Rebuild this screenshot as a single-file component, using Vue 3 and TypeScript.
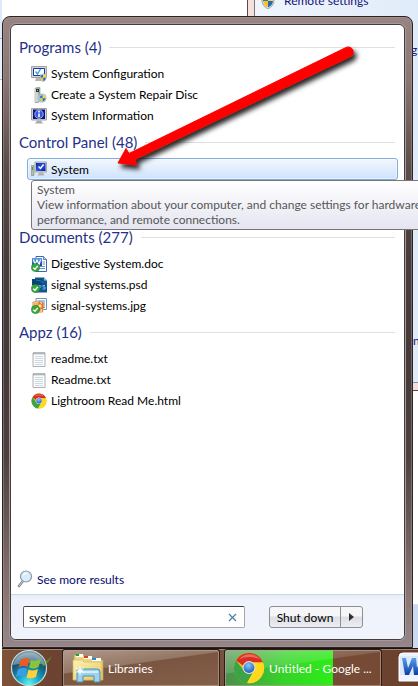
<script setup lang="ts">
import { ref } from 'vue'

type IconName = 'config' | 'repair' | 'info' | 'system' | 'doc' | 'psd' | 'jpg' | 'txt' | 'chrome'

interface Result {
  label: string
  icon: IconName
  selected?: boolean
}

interface Group {
  title: string
  count: number
  items: Result[]
}

const query = ref('system')

const groups: Group[] = [
  {
    title: 'Programs',
    count: 4,
    items: [
      { label: 'System Configuration', icon: 'config' },
      { label: 'Create a System Repair Disc', icon: 'repair' },
      { label: 'System Information', icon: 'info' },
    ],
  },
  {
    title: 'Control Panel',
    count: 48,
    items: [{ label: 'System', icon: 'system', selected: true }],
  },
  {
    title: 'Documents',
    count: 277,
    items: [
      { label: 'Digestive System.doc', icon: 'doc' },
      { label: 'signal systems.psd', icon: 'psd' },
      { label: 'signal-systems.jpg', icon: 'jpg' },
    ],
  },
  {
    title: 'Appz',
    count: 16,
    items: [
      { label: 'readme.txt', icon: 'txt' },
      { label: 'Readme.txt', icon: 'txt' },
      { label: 'Lightroom Read Me.html', icon: 'chrome' },
    ],
  },
]
</script>

<template>
  <div class="screen">
    <svg class="defs" width="0" height="0" aria-hidden="true">
      <defs>
        <linearGradient id="screenBlue" x1="0" y1="0" x2="1" y2="1">
          <stop offset="0" stop-color="#0a1fae" />
          <stop offset=".5" stop-color="#2c55ea" />
          <stop offset="1" stop-color="#0717a0" />
        </linearGradient>
        <linearGradient id="folderFill" x1="0" y1="0" x2="1" y2="1">
          <stop offset="0" stop-color="#fdf3b4" />
          <stop offset="1" stop-color="#e6c765" />
        </linearGradient>
        <linearGradient id="wordBlue" x1="0" y1="0" x2="0" y2="1">
          <stop offset="0" stop-color="#5b9be8" />
          <stop offset="1" stop-color="#0b3fa4" />
        </linearGradient>
        <radialGradient id="orbFill" cx=".5" cy=".95" r=".95">
          <stop offset="0" stop-color="#5ff2f4" />
          <stop offset=".35" stop-color="#159fc0" />
          <stop offset=".7" stop-color="#17506e" />
          <stop offset="1" stop-color="#8ba9b5" />
        </radialGradient>
        <radialGradient id="ball" cx=".45" cy=".3" r=".7">
          <stop offset="0" stop-color="#8fc5f8" />
          <stop offset="1" stop-color="#1a5fbd" />
        </radialGradient>
        <symbol id="shield" viewBox="0 0 14 16">
          <path d="M7 0 13 2.500V7Q13 13 7 16 1 13 1 7V2.500Z" fill="#dfe5e9" stroke="#79868e" stroke-width=".7" />
          <path d="M7 1.500V8H2V3.500Q5 3 7 1.500Z" fill="#2c77ce" />
          <path d="M7 1.500V8H12V3.500Q9 3 7 1.500Z" fill="#ffd22c" />
          <path d="M2 8H7V14.500Q2.500 12.500 2 8Z" fill="#fbc21c" />
          <path d="M12 8H7V14.500Q11.500 12.500 12 8Z" fill="#2469bd" />
        </symbol>
        <symbol id="check" viewBox="0 0 10 10">
          <circle cx="5" cy="5" r="4.500" fill="#35a83b" stroke="#1c7c2a" stroke-width=".6" />
          <path d="M2.500 5.200 4.400 7 7.600 3.200" fill="none" stroke="#fff" stroke-width="1.500" />
        </symbol>
        <symbol id="config" viewBox="0 0 16 16">
          <path d="M.5.500H15.500V11.500H.5Z" fill="#d5d6ce" stroke="#a3a49f" />
          <path d="M2.500 2.500H13.500V9.500H2.500Z" fill="#fff" stroke="#1733ad" />
          <path d="m4.500 5.500 2 2.500 3-5" fill="none" stroke="#37a0c8" stroke-width="1.300" />
          <path d="M5 12h6l1 3H4Z" fill="#b6b7b1" />
          <use href="#shield" x="8.500" y="7.500" width="7.500" height="8.500" />
        </symbol>
        <symbol id="repair" viewBox="0 0 16 16">
          <path d="M4 1.500 6 .5h3v14l-2 1H4Z" fill="#a7aaa4" stroke="#8b8f8a" stroke-width=".6" />
          <path d="M4 2h3v13H4Z" fill="#d0d3ce" />
          <path d="M5 2h3v3H5Z" fill="#223c28" />
          <path d="M6 3h1v1H6Z" fill="#3cff38" />
          <circle cx="11" cy="11" r="4.500" fill="#9ccbdc" />
          <use href="#shield" x="8" y="7" width="7.500" height="8.500" />
        </symbol>
        <symbol id="info" viewBox="0 0 16 16">
          <path d="M.5.500H15.500V12H.5Z" fill="#d0d1c9" stroke="#a3a49f" />
          <path d="M2 1.500H14V11H2Z" fill="#08147f" />
          <path d="M6 12.500h4l2 3H4Z" fill="#aaaba5" />
          <circle cx="8" cy="6.200" r="4.200" fill="#3457e0" stroke="#c5d0fb" stroke-width=".8" />
          <path d="M7.200 5.400h1.600v3.600H7.200ZM7.200 3h1.600v1.500H7.200Z" fill="#fff" />
        </symbol>
        <symbol id="system" viewBox="0 0 16 16">
          <path d="M.5 4.500h2.500v10H.5Z" fill="#b5bab3" stroke="#838880" stroke-width=".6" />
          <path d="M1 6h1v3H1Z" fill="#24b52a" />
          <path d="M4 1H15.500V11H4Z" fill="#d8d9d2" stroke="#a5a6a1" />
          <path d="M5 2H14.500V10H5Z" fill="url(#screenBlue)" />
          <path d="m7.500 5.500 2 2 3-4" fill="none" stroke="#fff" stroke-width="1.300" />
          <path d="M8 11.500h4l1.500 3H6.500Z" fill="#b2b3ad" />
        </symbol>
        <symbol id="doc" viewBox="0 0 16 16">
          <path d="M5 .5h7.500l3 3v12H5Z" fill="#fff" stroke="#3b66b3" />
          <path d="M12.500.5v3h3" fill="#bfd4f5" stroke="#3b66b3" stroke-width=".8" />
          <path d="M11.500 6h2.500M11.500 8h2.500M8 12.500h6M8 10.500h6" stroke="#6a8fd0" />
          <path d="M1 2h10v8H1Z" fill="url(#wordBlue)" />
          <path d="m2.500 3.500 1.500 5L6 4l2 4.500 1.500-5" fill="none" stroke="#fff" stroke-width="1.200" />
          <use href="#check" x="0" y="7" width="9" height="9" />
        </symbol>
        <symbol id="psd" viewBox="0 0 16 16">
          <path d="M4 .5h9l3 3v12H4Z" fill="#15558f" />
          <path d="M13 .5v3h3Z" fill="#83bfea" />
          <path d="M1 2h10v6H1Z" fill="#0c447a" />
          <path d="M5 3q5 0 7 3" fill="none" stroke="#2677b5" />
          <path d="M8 12.500v-4h1.500q1.200 1-.2 2H8M14 8.500h-2v1.500h2v2h-2.500" fill="none" stroke="#6cc3f6" stroke-width=".9" />
          <use href="#check" x="0" y="7" width="9" height="9" />
        </symbol>
        <symbol id="jpg" viewBox="0 0 16 16">
          <path d="M5 .5h10.500v11H5Z" fill="#fff" stroke="#7793bd" />
          <path d="M6.500 2H14v8H6.500Z" fill="#9cc9f1" />
          <path d="M2 4h9.500v10H2Z" fill="#fff" stroke="#e08438" />
          <path d="M3 5h7.500v8H3Z" fill="#f6b24c" />
          <path d="m8 3 2 3 3-1-1 3 2 2-4 1-2 2-2-3-2-2 3-1Z" fill="#ee7120" />
          <circle cx="9" cy="8" r="1.700" fill="#ffe68a" />
          <use href="#check" x="0" y="7" width="9" height="9" />
        </symbol>
        <symbol id="txt" viewBox="0 0 16 16">
          <path d="M2 2h12v13.500H2Z" fill="#fbfcfc" stroke="#a4a7a9" stroke-width=".9" />
          <path d="M3 1v2.500M5 1v2.500M7 1v2.500M9 1v2.500M11 1v2.500M13 1v2.500" stroke="#8d9295" stroke-width=".9" />
          <path d="M4 5.500h8M4 7.500h8M4 9.500h8M4 11.500h8M4 13.500h8" stroke="#c6d5dc" stroke-width=".9" />
        </symbol>
        <symbol id="chrome" viewBox="0 0 32 32">
          <circle cx="16" cy="16" r="15" fill="#e8c51d" />
          <path d="M3 8.500A15 15 0 0 1 30 10.500H16A6 6 0 0 0 10.500 14Z" fill="#dc2d1f" />
          <path d="M3 8.500A15 15 0 0 0 14 31L20 20A6 6 0 0 1 10.500 18Z" fill="#3ca447" />
          <path d="M30 10.500A15 15 0 0 1 14 31L21 19A6 6 0 0 0 19.500 10.500Z" fill="#ffd91e" />
          <path d="M6 7A14 14 0 0 1 27 7Q16 3 6 7Z" fill="#fff" opacity=".3" />
          <circle cx="16" cy="15.500" r="6.400" fill="#dfe5ea" />
          <circle cx="16" cy="15.500" r="5.400" fill="url(#ball)" />
        </symbol>
      </defs>
    </svg>

    <div class="backdrop">
      <div class="left-window"></div>
      <div class="right-window">
        <a class="remote" href="#remote">
          <svg width="14" height="16" aria-hidden="true"><use href="#shield" /></svg>
          Remote settings
        </a>
        <span class="cut cut-top">gs</span>
        <span class="cut cut-low">n</span>
      </div>
      <div class="lower-window"></div>
    </div>

    <main class="start-menu">
      <div class="panel">
        <div class="results">
          <section v-for="group in groups" :key="group.title" class="group">
            <h2>{{ group.title }} ({{ group.count }})</h2>
            <ul>
              <li v-for="item in group.items" :key="item.label">
                <a href="#open" class="item" :class="{ selected: item.selected }">
                  <svg width="16" height="16" aria-hidden="true"><use :href="'#' + item.icon" /></svg>
                  <span>{{ item.label }}</span>
                </a>
                <div v-if="item.selected" class="tooltip" role="tooltip">
                  <div>System</div>
                  <div>View information about your computer, and change settings for hardware,</div>
                  <div>performance, and remote connections.</div>
                </div>
              </li>
            </ul>
          </section>
        </div>

        <a class="more" href="#more">
          <svg width="16" height="18" viewBox="0 0 16 18" aria-hidden="true">
            <path d="m6 11-4 5" stroke="#777c80" stroke-width="2.500" stroke-linecap="round" />
            <path d="m6 11-4 5" stroke="#d9dcde" stroke-linecap="round" />
            <circle cx="9" cy="6.500" r="5.500" fill="#d7edfa" stroke="#8c99a5" stroke-width="1.200" />
            <path d="M5.500 6Q7 2 11 3.500 8 4 5.500 6Z" fill="#fff" />
          </svg>
          See more results
        </a>

        <footer class="actions">
          <div class="search">
            <input v-model="query" type="text" aria-label="Search programs and files" />
            <button type="button" aria-label="Clear search" @click="query = ''">
              <svg width="9" height="9" viewBox="0 0 9 9" aria-hidden="true">
                <path d="m1 1 7 7M8 1 1 8" stroke="#4c7fa5" stroke-width="1.200" />
              </svg>
            </button>
          </div>
          <div class="power">
            <button type="button" class="shutdown">Shut down</button>
            <button type="button" class="options" aria-label="Power options">
              <svg width="5" height="8" viewBox="0 0 5 8" aria-hidden="true"><path d="M0 0 5 4 0 8Z" fill="#303030" /></svg>
            </button>
          </div>
        </footer>
      </div>
    </main>

    <nav class="taskbar">
      <button type="button" class="orb" aria-label="Start">
        <svg width="48" height="38" viewBox="0 0 48 38" aria-hidden="true">
          <circle cx="21" cy="19" r="17.500" fill="url(#orbFill)" stroke="#c9dde0" stroke-width="1.200" />
          <path d="M5 16A16.500 16.500 0 0 1 37 16Q22 12 5 16Z" fill="#fff" opacity=".32" />
          <path d="M34 14Q40 12 44 6 41 14 35 18Z" fill="#59bd35" opacity=".5" />
          <path d="M13 11Q17 7.500 21.500 10L19.500 18Q15 15.500 10.500 18.500Z" fill="#ef5a24" />
          <path d="M23 11Q27 13 33 10L30.500 18Q26 21 21 18.500Z" fill="#86c53c" />
          <path d="M10 20.500Q14.500 17.500 19 20L17 28Q12.500 25.500 8 28Z" fill="#3b9de6" />
          <path d="M20.500 20.500Q25.500 22.500 30 20L28 28Q23 30.500 18.500 28.500Z" fill="#ffd138" />
        </svg>
      </button>
      <button type="button" class="task">
        <svg width="34" height="32" viewBox="0 0 34 32" aria-hidden="true">
          <path d="M3 5V3h10l2 3h8l1 2h8v20H3Z" fill="#eed680" stroke="#b99a42" stroke-width=".8" />
          <path d="M5 2h7v3H5Z" fill="#fff" /><path d="M5 2h3v2H5Z" fill="#15a62b" />
          <path d="M13 4h8v3h-8Z" fill="#fff" /><path d="M13 4h4v2h-4Z" fill="#d94028" />
          <path d="M21 6h9v3h-9Z" fill="#fff" /><path d="M21 6h4v2h-4Z" fill="#238bd8" />
          <path d="M2 8h9l2 2h18v18H2Z" fill="url(#folderFill)" stroke="#d5b75b" stroke-width=".7" />
          <path d="M6 30V19q0-2 2-2h18q3 0 3 3v10h-6v-6H12v6Z" fill="#9bd3ec" stroke="#4b91b6" />
          <path d="M7 20h20" stroke="#e4f8ff" stroke-width="1.500" />
          <path d="m9 13 1 4 4-2-3 3 3 3-4-1-1 4-1-4-4 1 3-3-3-3 4 2Z" fill="#fff" opacity=".85" />
        </svg>
        <span>Libraries</span>
      </button>
      <button type="button" class="task active">
        <svg width="32" height="32" aria-hidden="true"><use href="#chrome" /></svg>
        <span>Untitled - Google ...</span>
      </button>
      <button type="button" class="word" aria-label="Word">
        <svg width="32" height="32" viewBox="0 0 32 32" aria-hidden="true">
          <path d="M5 1H31V29H1V5Q1 1 5 1Z" fill="#edf4fd" stroke="#fff" />
          <path d="M2 4H25V23H2Z" fill="#dce9fa" />
          <path d="M4 6h4l2 10 4-10h4l1 10 4-10h4L21 23h-5l-1-9-4 9H7Z" fill="url(#wordBlue)" />
        </svg>
      </button>
    </nav>

    <svg class="arrow" width="290" height="155" viewBox="0 0 290 155" aria-hidden="true">
      <defs>
        <filter id="arrowShadow" x="-10%" y="-10%" width="120%" height="130%">
          <feDropShadow dx="3" dy="4" stdDeviation="2.500" flood-color="#000" flood-opacity=".85" />
        </filter>
      </defs>
      <path
        d="M17 123 25 108.500 28 113.500 245 7.500A5 5 0 0 1 249.500 16.500L33.500 119.500 36 125Z"
        fill="#f00"
        stroke="#f00"
        stroke-linejoin="round"
        filter="url(#arrowShadow)"
      />
    </svg>
  </div>
</template>

<style>
html,
body {
  margin: 0;
  overflow: hidden;
}
</style>

<style scoped>
.screen {
  position: relative;
  display: flex;
  flex-direction: column;
  min-height: 100vh;
  overflow: hidden;
  background: #fff;
  color: #000;
  font: 12px/15px Lato, 'Open Sans', sans-serif;
}
.screen * {
  box-sizing: border-box;
}
.defs {
  position: absolute;
}
button,
input {
  font: inherit;
  color: inherit;
  margin: 0;
}
button {
  padding: 0;
  border: 0;
  background: none;
}
svg {
  flex: none;
  display: block;
}

/* Windows behind the menu */
.backdrop {
  position: absolute;
  inset: 0;
}
.left-window {
  position: absolute;
  top: 0;
  left: 0;
  width: 2px;
  height: 80px;
  background: linear-gradient(#dfeaf8 0 38px, #a6bad4 38px 39px, #e9f1fb 39px);
  border-bottom: 1px solid #c0c0c0;
}
.right-window {
  position: absolute;
  top: 0;
  left: 247px;
  right: 0;
  height: 391px;
  border-left: 1px solid #55494a;
  border-bottom: 1px solid #55494a;
  background: #f6dfdc;
}
.right-window::before {
  content: '';
  position: absolute;
  inset: 0 0 7px 6px;
  border-left: 1px solid #77787c;
  border-bottom: 1px solid #8d8e94;
  background: linear-gradient(90deg, #f0f5fc, #e0ebf9);
}
.remote {
  position: absolute;
  top: -7px;
  left: 13px;
  display: flex;
  gap: 9px;
  color: #14147a;
  text-decoration: none;
  white-space: nowrap;
}
.cut {
  position: absolute;
  color: #14147a;
}
.cut-top {
  top: 42px;
  left: 163px;
}
.cut-low {
  top: 333px;
  left: 165px;
}
.lower-window {
  position: absolute;
  right: 0;
  bottom: 38px;
  width: 6px;
  height: 44px;
  background: #cbdaf0;
  border-top: 1px solid #e1e1e1;
}

/* Start menu frame */
.start-menu {
  position: relative;
  flex: 1;
  display: flex;
  margin: 16px 5px 0 2px;
  padding: 7px;
  border: 1px solid #2a2425;
  border-radius: 8px 8px 0 0;
  background: linear-gradient(#988480 0, #8b7773 60px, #5b4d4b 150px, #473d3c 240px, #443a39 340px, #4d4140 440px, #8e7b77 590px, #96868a);
  box-shadow: inset 0 0 0 1px #a5989580;
}
.panel {
  flex: 1;
  min-width: 0;
  display: flex;
  flex-direction: column;
  border: 1px solid #453d3d;
  border-radius: 6px;
  background: #fff;
  box-shadow: 0 0 0 1px #a59a98;
}
.results {
  flex: 1;
  padding: 7px 6px 0 8px;
}
.group {
  min-height: 95px;
}
h2 {
  display: flex;
  align-items: center;
  gap: 8px;
  height: 31px;
  margin: 0 3px 0 0;
  font-size: 15px;
  font-weight: 400;
  color: #1f3189;
  white-space: nowrap;
}
h2::after {
  content: '';
  flex: 1;
  height: 1px;
  background: #dfe1e1;
}
ul {
  margin: 0;
  padding: 0 0 0 8px;
  list-style: none;
}
li {
  position: relative;
}
.item {
  display: flex;
  align-items: center;
  gap: 4px;
  height: 21px;
  padding: 0 4px;
  border-radius: 3px;
  color: #000;
  text-decoration: none;
  white-space: nowrap;
}
.item.selected {
  height: 22px;
  padding: 0 3px;
  border: 1px solid #84acdd;
  background: linear-gradient(#f2f7fe, #cfe3fd);
  box-shadow: inset 0 0 0 1px #ffffff66;
}
.tooltip {
  position: absolute;
  z-index: 2;
  top: 22px;
  left: 4px;
  padding: 1px 5px 2px;
  border: 1px solid #767676;
  border-radius: 3px;
  background: linear-gradient(#fff, #e4e5f0);
  color: #575757;
  white-space: nowrap;
}
.more {
  display: flex;
  align-items: center;
  gap: 4px;
  height: 30px;
  padding-left: 6px;
  color: #0a0a70;
  text-decoration: none;
}
.actions {
  display: flex;
  align-items: center;
  justify-content: space-between;
  gap: 24px;
  height: 45px;
  padding: 0 41px 0 12px;
  border-top: 1px solid #ccd9ea;
  border-radius: 0 0 5px 5px;
  background: linear-gradient(#e6edf7, #f0f3fb 5px);
}
.search {
  flex: 1;
  display: flex;
  height: 22px;
  border: 1px solid #a4a8ac;
  border-top-color: #3f4143;
  border-left-color: #5d5f61;
  border-radius: 2px;
  background: #fff;
}
.search input {
  flex: 1;
  min-width: 0;
  padding: 0 5px;
  border: 0;
  outline: 0;
  background: none;
}
.search button {
  display: grid;
  place-items: center;
  width: 24px;
}
.power {
  display: flex;
  height: 22px;
  border: 1px solid #8c8f94;
  border-radius: 3px;
  background: linear-gradient(#f6f6f8 0 45%, #dcdee3 50%, #eceef2);
}
.shutdown {
  width: 70px;
}
.options {
  display: grid;
  place-items: center;
  width: 22px;
  border-left: 1px solid #8c8f94;
}

/* Taskbar */
.taskbar {
  position: relative;
  display: flex;
  height: 38px;
  margin-left: 2px;
  border-top: 1px solid #1f130f;
  background: linear-gradient(90deg, #80523a, #6b4330 50px, #765040 220px, #6a402c);
  box-shadow: inset 0 1px #a08475;
  color: #fff;
}
.taskbar button {
  flex: none;
}
.orb {
  width: 60px;
  padding-left: 6px;
}
.task {
  display: flex;
  align-items: center;
  gap: 3px;
  width: 158px;
  margin-right: 4px;
  padding: 0 8px;
  border: 1px solid #2e1d16;
  border-bottom: 0;
  border-radius: 3px 3px 0 0;
  background: linear-gradient(172deg, #b09a8d, #947765 40%, #7a5642 42%, #84604b);
  box-shadow: inset 0 0 0 1px #b8a294aa;
  white-space: nowrap;
}
.task.active {
  gap: 4px;
  background:
    linear-gradient(172deg, #ffffff55, #ffffff22 40%, #ffffff00 42%),
    linear-gradient(90deg, #4c8f4c, #35d428 60px, #2ced17 108px, #754b36 108px);
}
.word {
  padding-left: 12px;
}

.arrow {
  position: absolute;
  top: 40px;
  left: 101px;
  z-index: 3;
}
</style>
